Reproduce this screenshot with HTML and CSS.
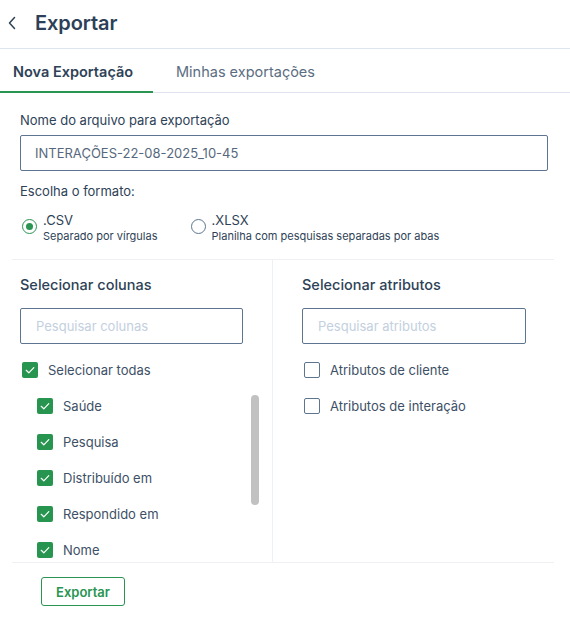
FILE: index.html
```html
<!DOCTYPE html>
<html lang="pt-BR">
<head>
<meta charset="utf-8">
<title>Exportar</title>
<link rel="stylesheet" href="styles.css">
</head>
<body>
<header class="top">
  <button class="back" aria-label="Voltar">
    <svg width="10" height="14" viewBox="0 0 10 14"><path d="M7.5 1.5 L2.5 7 L7.5 12.5" fill="none" stroke="#2e4257" stroke-width="1.5" stroke-linecap="round" stroke-linejoin="round"/></svg>
  </button>
  <h1 class="title">Exportar</h1>
</header>
<nav class="tabs">
  <div class="tab active">Nova Exportação</div>
  <div class="tab">Minhas exportações</div>
</nav>
<main class="main">
  <section class="form">
    <label class="lbl">Nome do arquivo para exportação</label>
    <div class="input filename">INTERAÇÕES-22-08-2025_10-45</div>
    <div class="lbl fmt">Escolha o formato:</div>
    <div class="radios">
      <div class="radio-opt">
        <span class="radio on"><span class="dot"></span></span>
        <div class="radio-text"><div class="rt">.CSV</div><div class="rs">Separado por vírgulas</div></div>
      </div>
      <div class="radio-opt">
        <span class="radio"></span>
        <div class="radio-text"><div class="rt">.XLSX</div><div class="rs">Planilha com pesquisas separadas por abas</div></div>
      </div>
    </div>
  </section>
  <section class="cols">
    <div class="col left">
      <h2 class="col-title">Selecionar colunas</h2>
      <div class="input search">Pesquisar colunas</div>
      <div class="check-row all first"><span class="cb on"><svg width="16" height="16" viewBox="0 0 16 16"><path d="M4.2 8.3 L6.8 10.8 L11.8 5.6" fill="none" stroke="#fff" stroke-width="1.2" stroke-linecap="round" stroke-linejoin="round"/></svg></span>Selecionar todas</div>
      <div class="list-wrap">
        <div class="list">
          <div class="check-row"><span class="cb on"><svg width="16" height="16" viewBox="0 0 16 16"><path d="M4.2 8.3 L6.8 10.8 L11.8 5.6" fill="none" stroke="#fff" stroke-width="1.2" stroke-linecap="round" stroke-linejoin="round"/></svg></span>Saúde</div>
          <div class="check-row"><span class="cb on"><svg width="16" height="16" viewBox="0 0 16 16"><path d="M4.2 8.3 L6.8 10.8 L11.8 5.6" fill="none" stroke="#fff" stroke-width="1.2" stroke-linecap="round" stroke-linejoin="round"/></svg></span>Pesquisa</div>
          <div class="check-row"><span class="cb on"><svg width="16" height="16" viewBox="0 0 16 16"><path d="M4.2 8.3 L6.8 10.8 L11.8 5.6" fill="none" stroke="#fff" stroke-width="1.2" stroke-linecap="round" stroke-linejoin="round"/></svg></span>Distribuído em</div>
          <div class="check-row"><span class="cb on"><svg width="16" height="16" viewBox="0 0 16 16"><path d="M4.2 8.3 L6.8 10.8 L11.8 5.6" fill="none" stroke="#fff" stroke-width="1.2" stroke-linecap="round" stroke-linejoin="round"/></svg></span>Respondido em</div>
          <div class="check-row"><span class="cb on"><svg width="16" height="16" viewBox="0 0 16 16"><path d="M4.2 8.3 L6.8 10.8 L11.8 5.6" fill="none" stroke="#fff" stroke-width="1.2" stroke-linecap="round" stroke-linejoin="round"/></svg></span>Nome</div>
          <div class="check-row"><span class="cb on"><svg width="16" height="16" viewBox="0 0 16 16"><path d="M4.2 8.3 L6.8 10.8 L11.8 5.6" fill="none" stroke="#fff" stroke-width="1.2" stroke-linecap="round" stroke-linejoin="round"/></svg></span>E-mail</div>
          <div class="check-row"><span class="cb on"><svg width="16" height="16" viewBox="0 0 16 16"><path d="M4.2 8.3 L6.8 10.8 L11.8 5.6" fill="none" stroke="#fff" stroke-width="1.2" stroke-linecap="round" stroke-linejoin="round"/></svg></span>Telefone</div>
        </div>
        <div class="thumb"></div>
      </div>
    </div>
    <div class="col right">
      <h2 class="col-title">Selecionar atributos</h2>
      <div class="input search">Pesquisar atributos</div>
      <div class="check-row all first"><span class="cb"></span>Atributos de cliente</div>
      <div class="check-row all"><span class="cb"></span>Atributos de interação</div>
    </div>
  </section>
  <footer class="actions">
    <button class="btn"><span>Exportar</span></button>
  </footer>
</main>
</body>
</html>
```
FILE: styles.css
```css
* { box-sizing: border-box; }
html, body { margin: 0; padding: 0; background: #fff; }
body {
  font-family: Inter, "Noto Sans", sans-serif;
  color: #2e4257;
  width: 570px;
}
.top {
  height: 49px;
  border-bottom: 1px solid #dde4ee;
  display: flex;
  align-items: center;
  padding-left: 7px;
  padding-bottom: 2px;
}
.back {
  border: 0; background: none; padding: 0;
  width: 12px; height: 14px;
  display: flex; align-items: center;
}
.title {
  margin: 0 0 0 16px;
  font-size: 20px;
  font-weight: 600;
  color: #2c4058;
  letter-spacing: -0.1px;
}
.tabs {
  display: flex;
  height: 44px;
  border-bottom: 1px solid #dde4ee;
}
.tab {
  font-size: 14.5px;
  color: #5b6d82;
  display: flex; align-items: center;
  padding-top: 1px;
}
.tab.active {
  width: 153px;
  padding-left: 13px;
  font-weight: 600;
  color: #2e4257;
  border-bottom: 2px solid #2a9452;
  margin-bottom: -1px;
  padding-top: 2px;
}
.tab + .tab { padding-left: 23px; }
.main {
  margin: 0 16px 0 12px;
}
.form {
  padding: 19px 6px 15px 8px;
  border-bottom: 1px solid #eef0f3;
}
.lbl {
  display: block;
  font-size: 13px;
  color: #2e4257;
  line-height: 16px;
}
.input {
  border: 1px solid #5d7590;
  border-radius: 2px;
  height: 36px;
  display: flex; align-items: center;
  font-size: 13px;
}
.filename {
  margin-top: 7px;
  padding-left: 14px;
  color: #56687d;
}
.fmt { margin-top: 12px; }
.radios {
  display: flex;
  margin-top: 13px;
  gap: 31px;
}
.radio-opt { display: flex; align-items: flex-start; }
.radio {
  width: 15px; height: 15px;
  border-radius: 50%;
  border: 1px solid #5d7590;
  margin: 7px 6px 0 2px;
  display: flex; align-items: center; justify-content: center;
  flex: none;
}
.radio.on { border: 1.5px solid #2a9452; }
.dot { width: 7px; height: 7px; border-radius: 50%; background: #2a9452; }
.rt { font-size: 13px; line-height: 16px; color: #2e4257; }
.rs { font-size: 11px; line-height: 15px; color: #2e4257; margin-top: 1px; }
.cols {
  display: flex;
  border-bottom: 1px solid #eef0f3;
}
.col { padding-top: 16px; }
.left {
  width: 261px;
  border-right: 1px solid #eef0f3;
  padding-left: 8px;
}
.right {
  flex: 1;
  padding-left: 29px;
}
.col-title {
  margin: 0;
  font-size: 14.5px;
  font-weight: 500;
  line-height: 18px;
  color: #2e4257;
}
.search {
  margin-top: 14px;
  padding-left: 15px;
  color: #c3d0de;
}
.left .search { width: 223px; }
.right .search { width: 224px; }
.check-row {
  display: flex;
  align-items: center;
  height: 36px;
  font-size: 13px;
  color: #3d5066;
}
.check-row.all { margin-left: 2px; }
.check-row.first { margin-top: 8px; }
.cb {
  width: 16px; height: 16px;
  border-radius: 2px;
  border: 1px solid #5d7590;
  margin-right: 10px;
  flex: none;
  display: block;
}
.cb.on { background: #27954f; border: 0; }
.cb svg { display: block; }
.list-wrap {
  position: relative;
  height: 174px;
  margin-right: 13px;
  overflow: hidden;
}
.list {
  height: 100%;
  overflow: hidden;
  padding-left: 17px;
}
.thumb {
  position: absolute;
  right: 0;
  top: 7px;
  width: 8px;
  height: 110px;
  border-radius: 4px;
  background: #c1c1c1;
}
.actions { padding: 14px 0 14px 29px; }
.btn {
  font-family: Inter, "Noto Sans", sans-serif;
  background: #fff;
  border: 1px solid #2a9452;
  border-radius: 3px;
  width: 84px;
  height: 29px;
  display: inline-flex;
  align-items: center;
  justify-content: center;
  color: #2a9452;
  font-weight: 600;
  font-size: 13px;
  padding: 0;
}
```
